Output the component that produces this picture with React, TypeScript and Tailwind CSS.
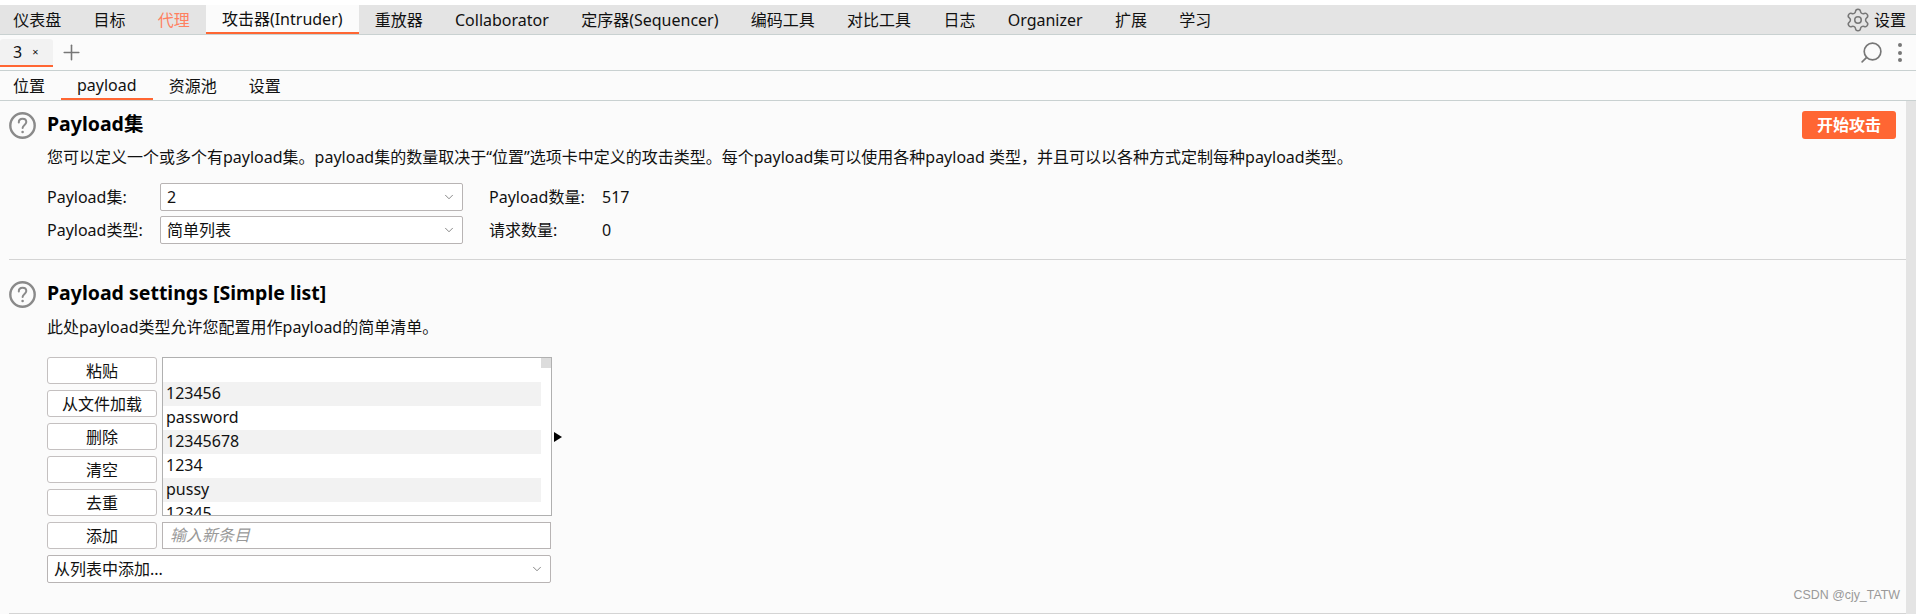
import { ChevronDown, Plus, Search, Settings } from 'lucide-react'

const mainTabs = ['仪表盘', '目标', '代理', '攻击器(Intruder)', '重放器', 'Collaborator', '定序器(Sequencer)', '编码工具', '对比工具', '日志', 'Organizer', '扩展', '学习']
const subTabs = ['位置', 'payload', '资源池', '设置']
const listButtons = ['粘贴', '从文件加载', '删除', '清空', '去重']
const listRows = ['', '123456', 'password', '12345678', '1234', 'pussy', '12345']

function HelpIcon() {
  return (
    <svg width="27" height="27" viewBox="0 0 27 27" fill="none" className="shrink-0">
      <circle cx="13.5" cy="13.5" r="12.2" stroke="#8a8a8a" strokeWidth="2.4" />
      <path d="M9.8 10.4c0-2.2 1.6-3.6 3.8-3.6s3.7 1.4 3.7 3.3c0 2.8-3.7 3-3.7 6" stroke="#8a8a8a" strokeWidth="2" strokeLinecap="round" />
      <circle cx="13.6" cy="20" r="1.3" fill="#8a8a8a" />
    </svg>
  )
}

function SelectBox({ value, className }: { value: string; className: string }) {
  return (
    <div className={`flex items-center justify-between bg-white border border-[#b8b4b4] rounded-[2px] pl-[6px] pr-[6px] ${className}`}>
      <span>{value}</span>
      <ChevronDown size={14} strokeWidth={1} className="text-[#333]" />
    </div>
  )
}

function SectionHead({ title, action }: { title: string; action?: boolean }) {
  return (
    <div className="flex items-center h-[28px] gap-[11px]">
      <HelpIcon />
      <h2 className="text-[19.5px] font-bold text-black pb-[2px]">{title}</h2>
      {action && (
        <button className="ml-auto w-[94px] h-[28px] rounded-[3px] bg-[#ff6633] text-white font-bold text-[16px]">开始攻击</button>
      )}
    </div>
  )
}

function ListButton({ label }: { label: string }) {
  return <button className="w-[110px] h-[27px] bg-white border border-[#c4c0c0] rounded-[3px] text-center">{label}</button>
}

export default function App() {
  return (
    <div className="h-[614px] w-[1916px] overflow-hidden pt-[5px] bg-white text-[16px] text-[#111] font-['Noto_Sans','Noto_Sans_CJK_SC',sans-serif]">
      {/* main tool tabs */}
      <div className="flex h-[30px] items-stretch bg-[#e4e4e4] border-b border-[#c9d1d1] -ml-[3px]">
        {mainTabs.map((t, i) => (
          <div
            key={t}
            className={
              i === 3
                ? 'flex items-center px-[16px] bg-[#fbfbfb] border-b-[2px] border-[#ff6633] text-[#111]'
                : i === 2
                  ? 'flex items-center px-[16.15px] text-[#ff8060]'
                  : 'flex items-center px-[16.15px]'
            }
          >
            {t}
          </div>
        ))}
        <div className="ml-auto flex items-center gap-[3px] pr-[10px]">
          <Settings size={26} strokeWidth={1.4} className="text-[#777]" />
          <span>设置</span>
        </div>
      </div>

      {/* intruder instance tabs */}
      <div className="flex h-[36px] items-center bg-[#fbfbfb] border-b border-[#c9d1d1]">
        <div className="flex items-center self-end h-[28px] w-[53px] pl-[13px] bg-[#f2f2f2] rounded-t-[3px] border-b-[2px] border-[#ff6633] mb-[3px]">
          <span>3</span>
          <span className="ml-[10px] text-[11px]">×</span>
        </div>
        <Plus size={25} strokeWidth={1.5} className="ml-[6px] text-[#777]" />
        <Search size={25} strokeWidth={1.6} className="ml-auto -scale-x-100 text-[#777]" />
        <div className="flex flex-col gap-[3.5px] ml-[14px] mr-[14px]">
          <span className="w-[4px] h-[4px] rounded-full bg-[#777]" />
          <span className="w-[4px] h-[4px] rounded-full bg-[#777]" />
          <span className="w-[4px] h-[4px] rounded-full bg-[#777]" />
        </div>
      </div>

      {/* attack config tabs */}
      <div className="flex h-[30px] items-stretch bg-[#fbfbfb] border-b border-[#c9d1d1]">
        {subTabs.map((t, i) => (
          <div
            key={t}
            className={
              i === 1
                ? 'flex items-center px-[16px] border-b-[2px] border-[#ff6633]'
                : 'flex items-center px-[16px] first:pl-[13px]'
            }
          >
            {t}
          </div>
        ))}
      </div>

      <div className="flex h-[513px] bg-[#fbfbfb]">
        <main className="flex-1 relative">
          <section className="pt-[10px] pl-[9px] pr-[10px]">
            <SectionHead title="Payload集" action />
            <p className="ml-[38px] mt-[6px] h-[24px] leading-[24px]">
              您可以定义一个或多个有payload集。payload集的数量取决于“位置”选项卡中定义的攻击类型。每个payload集可以使用各种payload 类型，并且可以以各种方式定制每种payload类型。
            </p>
            <div className="ml-[38px] mt-[14px] grid grid-cols-[113px_303px_26px_113px_1fr] gap-y-[5px] items-center">
              <span>Payload集:</span>
              <SelectBox value="2" className="h-[28px]" />
              <span />
              <span>Payload数量:</span>
              <span>517</span>
              <span>Payload类型:</span>
              <SelectBox value="简单列表" className="h-[28px]" />
              <span />
              <span>请求数量:</span>
              <span>0</span>
            </div>
          </section>
          <div className="ml-[9px] mt-[15px] border-b border-[#d4d4d4]" />

          <section className="pt-[20px] pl-[9px]">
            <SectionHead title="Payload settings [Simple list]" />
            <p className="ml-[38px] mt-[7px] h-[24px] leading-[24px]">此处payload类型允许您配置用作payload的简单清单。</p>
            <div className="ml-[38px] mt-[18px] w-[504px]">
              <div className="flex gap-[5px] items-stretch">
                <div className="flex flex-col gap-[6px] shrink-0">
                  {listButtons.map(b => <ListButton key={b} label={b} />)}
                </div>
                <div className="relative shrink-0 w-[390px] h-[159px] bg-white border border-[#b0b0b0] overflow-hidden pr-[10px]">
                  {listRows.map((r, i) => (
                    <div key={i} className={i % 2 === 1 ? 'h-[24px] leading-[23px] px-[3px] bg-[#f2f2f2]' : 'h-[24px] leading-[23px] px-[3px]'}>{r}</div>
                  ))}
                  <div className="absolute top-0 right-0 w-[10px] h-[10px] bg-[#dcdcdc]" />
                </div>
                <svg width="9" height="10" viewBox="0 0 9 10" className="shrink-0 self-center -ml-[3px]">
                  <path d="M0 0 L8 5 L0 10 Z" fill="#000" />
                </svg>
              </div>
              <div className="flex gap-[5px] mt-[6px]">
                <ListButton label="添加" />
                <div className="w-[389px] h-[27px] bg-white border border-[#b8b4b4] pl-[7px] italic text-[#999] leading-[25px]">输入新条目</div>
              </div>
              <SelectBox value="从列表中添加..." className="mt-[6px] h-[28px]" />
            </div>
          </section>
          <div className="ml-[9px] mt-[30px] border-b border-[#d4d4d4]" />
          <span className="absolute right-[6px] bottom-[9px] text-[#999] text-[12.4px] font-['Liberation_Sans',sans-serif]">CSDN @cjy_TATW</span>
        </main>
        <div className="w-[10px] bg-[#e4e4e4]" />
      </div>
    </div>
  )
}
